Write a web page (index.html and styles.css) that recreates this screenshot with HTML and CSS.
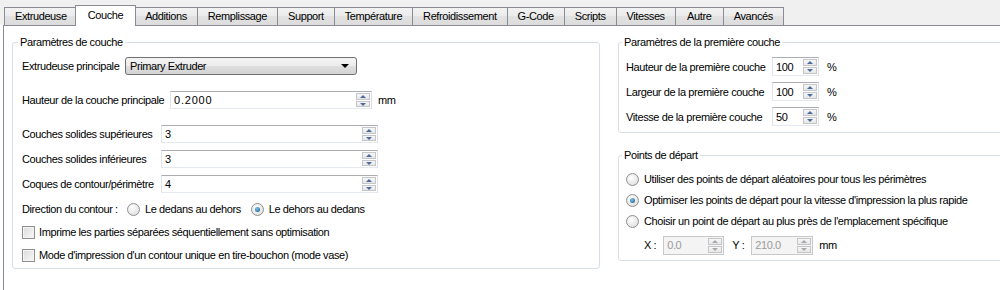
FILE: index.html
```html
<!DOCTYPE html>
<html lang="fr">
<head>
    <meta charset="UTF-8">
    <title>Couche</title>
    <link rel="stylesheet" href="styles.css">
</head>
<body>
    <div class="tabbar">
        <span class="tab">Extrudeuse</span>
        <span class="tab active">Couche</span>
        <span class="tab">Additions</span>
        <span class="tab">Remplissage</span>
        <span class="tab">Support</span>
        <span class="tab">Température</span>
        <span class="tab">Refroidissement</span>
        <span class="tab">G-Code</span>
        <span class="tab">Scripts</span>
        <span class="tab">Vitesses</span>
        <span class="tab">Autre</span>
        <span class="tab">Avancés</span>
    </div>
    <div class="pane">
        <fieldset class="group left-group">
            <legend>Paramètres de couche</legend>
            <div class="row first">
                <span class="lbl w-combo">Extrudeuse principale</span>
                <div class="combo">Primary Extruder<span class="arrow"></span></div>
            </div>
            <div class="row wide">
                <span class="lbl w-height">Hauteur de la couche principale</span>
                <div class="spin w200"><span class="val mono">0.2000</span><span class="btns"><i class="up"></i><i class="down"></i></span></div>
                <span class="unit">mm</span>
            </div>
            <div class="row wide">
                <span class="lbl w-solid">Couches solides supérieures</span>
                <div class="spin w215"><span class="val">3</span><span class="btns"><i class="up"></i><i class="down"></i></span></div>
            </div>
            <div class="row">
                <span class="lbl w-solid">Couches solides inférieures</span>
                <div class="spin w215"><span class="val">3</span><span class="btns"><i class="up"></i><i class="down"></i></span></div>
            </div>
            <div class="row">
                <span class="lbl w-solid">Coques de contour/périmètre</span>
                <div class="spin w215"><span class="val">4</span><span class="btns"><i class="up"></i><i class="down"></i></span></div>
            </div>
            <div class="row">
                <span class="lbl w-dir">Direction du contour :</span>
                <span class="radio"></span><span class="opt">Le dedans au dehors</span>
                <span class="radio checked"></span><span class="opt">Le dehors au dedans</span>
            </div>
            <div class="row tight">
                <span class="check"></span><span class="opt">Imprime les parties séparées séquentiellement sans optimisation</span>
            </div>
            <div class="row tight">
                <span class="check"></span><span class="opt">Mode d'impression d'un contour unique en tire-bouchon (mode vase)</span>
            </div>
        </fieldset>

        <div class="right-col">
            <fieldset class="group first-layer">
                <legend>Paramètres de la première couche</legend>
                <div class="row first tall">
                    <span class="lbl w-first">Hauteur de la première couche</span>
                    <div class="spin w45"><span class="val">100</span><span class="btns"><i class="up"></i><i class="down"></i></span></div>
                    <span class="unit pct">%</span>
                </div>
                <div class="row tall">
                    <span class="lbl w-first">Largeur de la première couche</span>
                    <div class="spin w45"><span class="val">100</span><span class="btns"><i class="up"></i><i class="down"></i></span></div>
                    <span class="unit pct">%</span>
                </div>
                <div class="row tall">
                    <span class="lbl w-first">Vitesse de la première couche</span>
                    <div class="spin w45"><span class="val">50</span><span class="btns"><i class="up"></i><i class="down"></i></span></div>
                    <span class="unit pct">%</span>
                </div>
            </fieldset>

            <fieldset class="group start-points">
                <legend>Points de départ</legend>
                <div class="row first">
                    <span class="radio"></span><span class="opt">Utiliser des points de départ aléatoires pour tous les périmètres</span>
                </div>
                <div class="row close">
                    <span class="radio checked"></span><span class="opt">Optimiser les points de départ pour la vitesse d'impression la plus rapide</span>
                </div>
                <div class="row close">
                    <span class="radio"></span><span class="opt">Choisir un point de départ au plus près de l'emplacement spécifique</span>
                </div>
                <div class="row coords">
                    <span class="axis">X :</span>
                    <div class="spin disabled w59"><span class="val">0.0</span><span class="btns"><i class="up"></i><i class="down"></i></span></div>
                    <span class="axis">Y :</span>
                    <div class="spin disabled w60"><span class="val">210.0</span><span class="btns"><i class="up"></i><i class="down"></i></span></div>
                    <span class="unit">mm</span>
                </div>
            </fieldset>
        </div>
    </div>
</body>
</html>
```

FILE: styles.css
```css
body {
    margin: 0;
    padding: 0;
    width: 1000px;
    height: 290px;
    overflow: hidden;
    background: #ffffff;
    font-family: 'Liberation Sans', Arial, sans-serif;
    font-size: 11px;
    letter-spacing: -0.4px;
    color: #000000;
}

/* tab strip */
.tabbar {
    height: 25px;
    background: #f0f0f0;
    display: flex;
    align-items: flex-end;
    padding-left: 4px;
}

.tab {
    position: relative;
    height: 17px;
    min-width: 27px;
    line-height: 17px;
    padding: 0 10px;
    border: 1px solid #898c95;
    border-bottom: none;
    margin-right: -1px;
    background: linear-gradient(#f2f2f2, #ebebeb 50%, #e2e2e2 50%, #dcdcdc);
    text-align: center;
    white-space: nowrap;
}

.tab.active {
    height: 20px;
    line-height: 19px;
    margin: 0 -1px -1px -2px;
    padding: 0 12px;
    background: #ffffff;
    z-index: 2;
}

.tab.active + .tab {
    margin-left: -1px;
}

/* pane */
.pane {
    height: 264px;
    margin-left: 3px;
    border-top: 1px solid #898c95;
    border-left: 1px solid #898c95;
    display: flex;
    align-items: flex-start;
    padding: 10px 0 0 8px;
    gap: 18px;
}

.group {
    margin: 0;
    border: 1px solid #d5dfe5;
    border-radius: 3px;
    padding: 0 9px 4px 9px;
    min-width: 0;
}

.group legend {
    padding: 0 2px;
    margin-left: -4px;
    line-height: 13px;
}

.left-group {
    width: 568px;
    flex-shrink: 0;
}

.right-col {
    width: 420px;
    flex-shrink: 0;
}

.first-layer {
    padding: 0 7px 6px 7px;
}

.start-points {
    margin-top: 16px;
    padding: 0 7px 5px 7px;
}

/* rows */
.row {
    height: 18px;
    display: flex;
    align-items: center;
    margin-top: 7px;
    white-space: nowrap;
}

.row.first {
    margin-top: 8px;
}

.row.wide {
    margin-top: 16px;
}

.row.tight {
    margin-top: 5px;
}

.row.tall {
    height: 19px;
    margin-top: 6px;
}

.first-layer .row.first {
    margin-top: 8px;
}

.row.close {
    margin-top: 3px;
}

.row.coords {
    height: 20px;
    margin-top: 5px;
    padding-left: 18px;
}

.lbl {
    flex-shrink: 0;
}

.w-combo { width: 103px; }
.w-height { width: 148px; }
.w-solid { width: 139px; }
.w-dir { width: 105px; }
.w-first { width: 146px; }

.unit {
    margin-left: 6px;
}

.unit.pct {
    margin-left: 8px;
}

/* combo box */
.combo {
    position: relative;
    width: 226px;
    height: 16px;
    line-height: 16px;
    padding-left: 4px;
    border: 1px solid #707070;
    border-radius: 3px;
    background: linear-gradient(#f4f4f4, #ececec 50%, #dfdfdf 50%, #d4d4d4);
}

.combo .arrow {
    position: absolute;
    right: 7px;
    top: 6px;
    border-left: 4px solid transparent;
    border-right: 4px solid transparent;
    border-top: 4px solid #000000;
}

/* spin box */
.spin {
    position: relative;
    height: 16px;
    border: 1px solid #abadb3;
    border-left-color: #e2e3ea;
    border-bottom-color: #e3e9ef;
    border-right-color: #dbdfe6;
    background: #ffffff;
    display: flex;
    align-items: center;
}

.tall .spin,
.coords .spin {
    height: 17px;
}

.spin .val {
    padding-left: 3px;
    flex: 1;
}

.spin .mono {
    letter-spacing: 0.8px;
}

.spin .btns {
    width: 14px;
    height: calc(100% - 2px);
    margin-right: 1px;
    display: flex;
    flex-direction: column;
    gap: 1px;
}

.spin .btns i {
    flex: 1;
    position: relative;
    border: 1px solid #c4c6ca;
    background: linear-gradient(#f7f7f7, #e6e6e6);
}

.spin .btns i::after {
    content: "";
    position: absolute;
    left: 3px;
    border-left: 3px solid transparent;
    border-right: 3px solid transparent;
}

.spin .btns .up::after {
    top: 1px;
    border-bottom: 3px solid #4a6a9a;
}

.spin .btns .down::after {
    top: 1px;
    border-top: 3px solid #4a6a9a;
}

.spin.disabled {
    background: #f4f4f4;
    color: #9a9a9a;
    border-color: #c8c8c8;
}

.spin.disabled .btns i::after {
    border-bottom-color: #a8a8a8;
    border-top-color: #a8a8a8;
}

.spin.disabled .btns .up::after {
    border-top-color: transparent;
}

.spin.disabled .btns .down::after {
    border-bottom-color: transparent;
}

.w200 { width: 200px; }
.w215 { width: 215px; }
.w45 { width: 45px; }
.w59 { width: 59px; }
.w60 { width: 60px; }

.axis {
    margin: 0 7px 0 0;
}

.spin + .axis {
    margin-left: 8px;
}

/* radio / check */
.radio {
    width: 11px;
    height: 11px;
    border: 1px solid #8e8f8f;
    border-radius: 50%;
    background: radial-gradient(circle at 40% 35%, #ffffff, #d8d8d8);
    position: relative;
    flex-shrink: 0;
    margin-right: 5px;
}

.radio.checked::after {
    content: "";
    position: absolute;
    left: 3px;
    top: 3px;
    width: 5px;
    height: 5px;
    border-radius: 50%;
    background: radial-gradient(circle at 40% 35%, #7cc4ee, #14507f);
}

.opt + .radio {
    margin-left: 10px;
}

.check {
    width: 11px;
    height: 11px;
    border: 1px solid #8e8f8f;
    background: linear-gradient(135deg, #dcdcdc, #f8f8f8);
    box-shadow: inset 0 0 0 1px #f4f4f4;
    flex-shrink: 0;
    margin-right: 4px;
}
```
